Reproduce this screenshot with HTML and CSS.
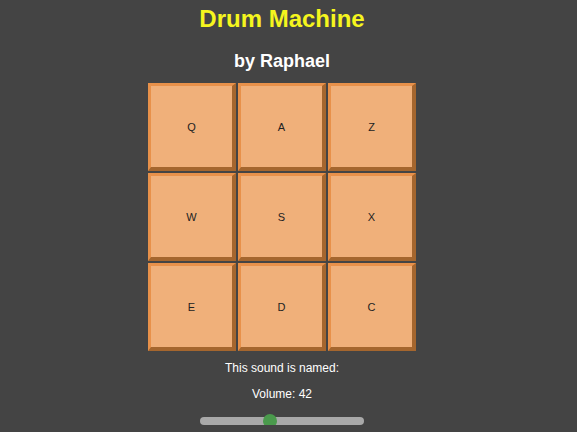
FILE: index.html
```html
<!DOCTYPE html>
<html>
<head>
<meta charset="utf-8">
<link rel="stylesheet" href="styles.css">
</head>
<body>
<div class="app">
  <h1 class="title">Drum Machine</h1>
  <h2 class="author">by Raphael</h2>
  <div class="pads">
    <div class="pad">Q</div>
    <div class="pad">A</div>
    <div class="pad">Z</div>
    <div class="pad">W</div>
    <div class="pad">S</div>
    <div class="pad">X</div>
    <div class="pad">E</div>
    <div class="pad">D</div>
    <div class="pad">C</div>
  </div>
  <p class="info">This sound is named:</p>
  <p class="info volume">Volume: 42</p>
  <input class="slider" type="range" min="0" max="100" value="42">
</div>
</body>
</html>
```
FILE: styles.css
```css
html, body {
  margin: 0;
  padding: 0;
  background: #444444;
  font-family: "Liberation Sans", Arial, sans-serif;
}
.app {
  width: 564px;
  display: flex;
  flex-direction: column;
  align-items: center;
}
.title {
  margin: 5px 0 0;
  font-size: 24px;
  line-height: 28px;
  color: #f5f51e;
  font-weight: bold;
}
.author {
  margin: 17px 0 0;
  font-size: 18px;
  line-height: 22px;
  color: #ffffff;
  font-weight: bold;
}
.pads {
  margin-top: 11px;
  display: grid;
  grid-template-columns: repeat(3, 88px);
  grid-template-rows: repeat(3, 88px);
  gap: 2px;
}
.pad {
  box-sizing: border-box;
  background: #f0b07a;
  border-style: solid;
  border-width: 3px 4px 4px 3px;
  border-color: #e8914a #a5662e #a5662e #e8914a;
  display: flex;
  align-items: center;
  justify-content: center;
  font-size: 11px;
  color: #222;
}
.info {
  margin: 10px 0 0;
  font-size: 12px;
  line-height: 15px;
  color: #ffffff;
}
.volume {
  margin-top: 11px;
}
.slider {
  -webkit-appearance: none;
  appearance: none;
  margin: 15px 0 0;
  width: 164px;
  height: 8px;
  border-radius: 4px;
  background: #a9a9a9;
  outline: none;
}
.slider::-webkit-slider-thumb {
  -webkit-appearance: none;
  appearance: none;
  width: 14px;
  height: 14px;
  border-radius: 50%;
  background: #4a9a4c;
  border: none;
}
```
